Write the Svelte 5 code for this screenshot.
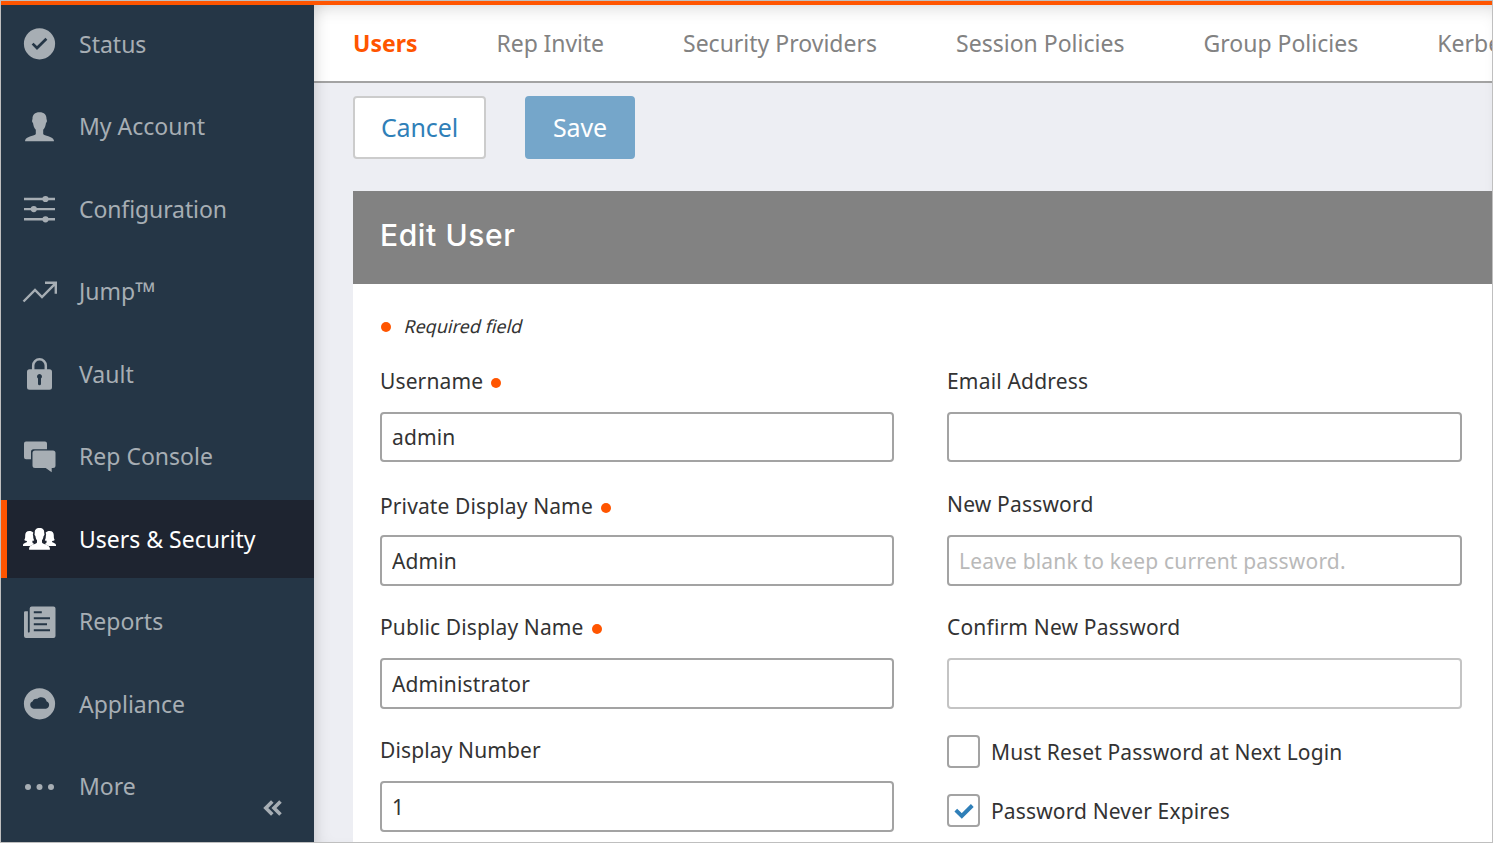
<script>
  const nav = [
    { id: 'status', label: 'Status' },
    { id: 'account', label: 'My Account' },
    { id: 'config', label: 'Configuration', tight: true },
    { id: 'jump', label: 'Jump', mark: '™' },
    { id: 'vault', label: 'Vault' },
    { id: 'console', label: 'Rep Console' },
    { id: 'users', label: 'Users & Security', active: true },
    { id: 'reports', label: 'Reports' },
    { id: 'appliance', label: 'Appliance' },
    { id: 'more', label: 'More' }
  ];
  const tabs = ['Users', 'Rep Invite', 'Security Providers', 'Session Policies', 'Group Policies', 'Kerberos'];
  const side = 'M7.8 9.9c-2.8 0-4.2 1.8-4.1 4.600.1 2.100-.3 3.500-1 4.600.8.600 1.600.800 2.700.900v1c-.8 1-3.600.900-3.900 3v1h7.300c1-.9 2.500-1.400 4-2-1.300-.6-1.700-1-1.900-2v-1.200c.7-.1 1.300-.3 1.800-.6-.8-1.200-1-2.600-1-4.200-.6-1.300-.3-2.400.200-3.300-.8-1.200-2.300-1.800-4.100-1.800z';
</script>

<div class="frame">
  <div class="topline"></div>
  <div class="body">
    <nav class="side">
      {#each nav as item}
        <a class="item" class:active={item.active} class:tight={item.tight} href="#{item.id}">
          <svg class="icon" viewBox="-0.5 0 36 36" fill="currentColor">
            {#if item.id === 'status'}
              <circle cx="18" cy="17.8" r="15.6" />
              <path d="M11.1 17.6l4.4 4.400 9.400-9.300" fill="none" stroke="#253646" stroke-width="2.7" />
            {:else if item.id === 'account'}
              <path d="M18 3.9c-4.6 0-7.2 2.6-7 6.6l-.4 1.6c-.2 1.2.3 2 .9 2.5.4 3 1.3 5.1 2.8 6.9v4.3c-1 2.1-9.3 2-10.7 6.2v1h28.800v-1c-1.400-4.200-9.700-4.100-10.700-6.200v-4.300c1.500-1.800 2.400-3.900 2.800-6.900.6-.5 1.100-1.300.9-2.500l-.4-1.600c.2-4-2.400-6.600-7-6.600z" transform="translate(0 -0.7)" />
            {:else if item.id === 'config'}
              <path d="M2.500 6.800h31v2.400h-31zM2.500 16.900h31v2.400h-31zM2.500 27.100h31v2.400h-31z" />
              <circle cx="24" cy="8" r="3.100" /><circle cx="12.300" cy="18.100" r="3.100" /><circle cx="24" cy="28.300" r="3.100" />
            {:else if item.id === 'jump'}
              <path d="M2 27.500L13.500 16l7 7L33.500 9.800M23.500 8.800h10.800v10.900" fill="none" stroke="currentColor" stroke-width="2.400" />
            {:else if item.id === 'vault'}
              <path d="M11.700 15V9.500a6.300 6.300 0 0 1 12.600 0V15" fill="none" stroke="currentColor" stroke-width="2.500" />
              <path fill-rule="evenodd" d="M8 13.200h20a2.500 2.500 0 0 1 2.500 2.500v15.500a2.500 2.500 0 0 1-2.500 2.500h-20a2.500 2.500 0 0 1-2.500-2.500v-15.500a2.500 2.500 0 0 1 2.500-2.500zM18 18a2.500 2.500 0 0 0-1.500 4.500v5.200a1.500 1.500 0 0 0 3 0v-5.200A2.500 2.500 0 0 0 18 18z" />
            {:else if item.id === 'console'}
              <path d="M4.500 2.500h19a2 2 0 0 1 2 2v5.800H12a2.500 2.500 0 0 0-2.500 2.500v7.500h-5a2 2 0 0 1-2-2V4.500a2 2 0 0 1 2-2z" />
              <path d="M13.500 11.500h18a2.500 2.500 0 0 1 2.500 2.500v12.500a2.500 2.500 0 0 1-2.500 2.500h-1.300v4.200l-6-4.200H13.500a2.500 2.500 0 0 1-2.500-2.500V14a2.500 2.500 0 0 1 2.500-2.500z" />
            {:else if item.id === 'users'}
              <path d="M18 6.900c-3.500 0-5 2-4.700 5l-.3 1.300c0 .9.400 1.400.9 1.800.2 2 .8 3.300 1.600 4.200v2.300c-1.200 2-7.300 1.700-7.900 5.700v1.600h20.800v-1.600c-.6-4-6.700-3.700-7.900-5.700v-2.300c.8-.9 1.400-2.200 1.600-4.200.5-.4.9-.9.9-1.800l-.3-1.300c.3-3-1.200-5-4.700-5z" />
              <path d={side} />
              <path d={side} transform="translate(36 0) scale(-1 1)" />
            {:else if item.id === 'reports'}
              <path d="M3.800 7.200h2.600v20.300c0 1.500 1.800 1.500 1.800 0V4.500a2 2 0 0 1 2-2H32a2 2 0 0 1 2 2v27.400a2 2 0 0 1-2 2H4.500a2 2 0 0 1-2-2V8.500a1.300 1.300 0 0 1 1.300-1.300z" />
              <path d="M12.300 8.200h8M12.300 14.300h16.200M12.300 20.300h13.200M12.300 26.300h16.200" stroke="#253646" stroke-width="2" />
            {:else if item.id === 'appliance'}
              <circle cx="18" cy="17.8" r="15.600" />
              <path d="M12.200 22.700a3.900 3.900 0 0 1-1-7.500c.8-1.900 2.700-2.700 4.500-2.300 2.900-2.900 8.600-1.600 9.500 2.600 3.500 1.100 3.200 6.600-.8 7.200z" fill="#253646" />
            {:else}
              <circle cx="6.500" cy="18" r="3" /><circle cx="18" cy="18" r="3" /><circle cx="29.500" cy="18" r="3" />
            {/if}
          </svg>
          <span>{item.label}{#if item.mark}<small>{item.mark}</small>{/if}</span>
        </a>
      {/each}
      <svg class="collapse" viewBox="0 0 20 18" fill="none" stroke="currentColor" stroke-width="3.6">
        <path d="M10.300 2.500L3.800 9l6.500 6.500M18.500 2.500L12 9l6.500 6.500" />
      </svg>
    </nav>

    <main>
      <div class="tabs">
        {#each tabs as tab, i}
          <a class="tab" class:current={i === 0} class:tight={i === 1} href="#{i}">{tab}</a>
        {/each}
      </div>

      <div class="content">
        <div class="actions">
          <button class="btn cancel">Cancel</button>
          <button class="btn save">Save</button>
        </div>

        <section class="panel">
          <h1>Edit User</h1>
          <div class="form">
            <p class="note"><i class="dot"></i><span>Required field</span></p>
            <div class="cols">
              <div class="col">
                <label class="first"><span>Username <i class="dot"></i></span><input value="admin" /></label>
                <label class="low"><span>Private Display Name <i class="dot"></i></span><input value="Admin" /></label>
                <label><span>Public Display Name <i class="dot"></i></span><input value="Administrator" /></label>
                <label><span>Display Number</span><input value="1" /></label>
              </div>
              <div class="col right">
                <label class="first"><span>Email Address</span><input /></label>
                <label><span>New Password</span><input placeholder="Leave blank to keep current password." /></label>
                <label><span>Confirm New Password</span><input class="dim" /></label>
                <div class="checks">
                  <div class="check"><b class="box"></b>Must Reset Password at Next Login</div>
                  <div class="check">
                    <b class="box"><svg viewBox="0 0 20 16"><path d="M1.800 7.200l6 5.800L18.300 2.500" fill="none" stroke="#2f7fb8" stroke-width="3.900" /></svg></b>
                    Password Never Expires
                  </div>
                </div>
              </div>
            </div>
          </div>
        </section>
      </div>
    </main>
  </div>
</div>

<style>
  :global(body) { margin: 0; overflow: hidden; }
  * { box-sizing: border-box; }
  .frame { width: 1493px; height: 843px; border: 1px solid #bfbfbf; display: flex; flex-direction: column; overflow: hidden; font-family: 'Noto Sans', sans-serif; }
  .topline { height: 4px; background: #ff5500; flex: none; }
  .body { display: flex; flex: 1; min-height: 0; }
  .side { position: relative; width: 313px; flex: none; background: #253646; color: #a7aeb4; display: flex; flex-direction: column; gap: 4.5px; }
  .item { height: 78px; flex: none; display: flex; align-items: center; padding-left: 20px; color: inherit; text-decoration: none; font-size: 23px; line-height: 30px; }
  .item:first-child { margin-top: -0.3px; }
  .item:nth-child(even) .icon { margin-top: 1px; }
  .item span { margin-left: 22px; white-space: nowrap; }
  .item small { font: 27px/1 'Open Sans', sans-serif; line-height: 0; vertical-align: -2px; }
  .item.active { background: #1e2430; color: #fff; border-left: 6px solid #ff5500; padding-left: 14px; }
  .tight { letter-spacing: -0.1px; }
  .icon { width: 36px; height: 36px; flex: none; }
  .collapse { position: absolute; left: 261px; top: 794px; width: 20px; height: 18px; }
  main { flex: 1; min-width: 0; background: #edeef3; display: flex; flex-direction: column; position: relative; }
  main::before { content: ''; position: absolute; inset: 0; box-shadow: inset 12px 0 16px -10px rgba(0, 0, 0, 0.13), inset 0 12px 18px -10px rgba(0, 0, 0, 0.16); pointer-events: none; z-index: 2; }
  .tabs { height: 78px; flex: none; background: #fff; border-bottom: 2px solid #a3a3a3; display: flex; align-items: center; gap: 79.1px; padding-left: 39px; overflow: hidden; }
  .tab { color: #828282; text-decoration: none; font-size: 23px; line-height: 30px; white-space: nowrap; flex: none; }
  .current { color: #ff5500; font-weight: 700; }
  .content { padding: 13px 0 0 39px; flex: 1; display: flex; flex-direction: column; min-height: 0; }
  .actions { display: flex; gap: 39px; flex: none; }
  .btn { height: 63px; border-radius: 4px; border: 2px solid #ccc; background: #fff; color: #2f7fb8; font: 25px/30px 'Noto Sans', sans-serif; letter-spacing: -0.1px; padding: 0 0 2px; width: 133px; }
  .save { background: #75a6ca; border-color: #75a6ca; color: #fff; width: 110px; }
  .panel { margin-top: 32px; background: #fff; flex: 1; min-height: 0; overflow: hidden; position: relative; z-index: 3; }
  h1 { margin: 0; height: 93px; background: #828282; color: #fff; font: 500 30px/89px Inter, sans-serif; letter-spacing: 0.6px; padding-left: 27px; }
  .form { padding: 27px 30px 0 27px; color: #333; }
  .note { margin: 0; height: 30px; display: flex; align-items: center; font-size: 18px; line-height: 28px; gap: 14px; padding-left: 0.5px; }
  .note .dot { margin-top: 2px; }
  .note span { transform: skewX(-14deg); }
  .dot { display: inline-block; width: 10px; height: 10px; border-radius: 50%; background: #ff5500; }
  .cols { display: grid; grid-template-columns: 514px 515px; gap: 53px; margin-top: 22px; }
  .col { display: flex; flex-direction: column; letter-spacing: 0.12px; }
  .col.right { letter-spacing: 0.18px; }
  label { display: block; height: 123px; font-size: 21px; }
  label span { display: flex; align-items: center; gap: 8px; height: 36px; line-height: 36px; }
  .low span { padding-top: 3px; }
  label .dot { margin-top: 4px; }
  input { display: block; width: 100%; height: 51px; margin-top: 13px; border: 2px solid #a3a3a3; border-radius: 4px; background: #fff; color: #333; font: 21px/30px 'Noto Sans', sans-serif; letter-spacing: inherit; padding: 0 10px; }
  label.first input { height: 50px; }
  input.dim { border-color: #c4c4c4; }
  input::placeholder { color: #b9b9b9; opacity: 1; }
  .checks { display: flex; flex-direction: column; gap: 26px; padding-top: 3px; letter-spacing: 0.14px; }
  .check { display: flex; align-items: center; height: 33px; font-size: 21px; gap: 11px; }
  .box { width: 33px; height: 33px; border: 2px solid #a3a3a3; border-radius: 4px; display: flex; align-items: center; justify-content: center; }
  .box svg { width: 20px; height: 16px; }
</style>
